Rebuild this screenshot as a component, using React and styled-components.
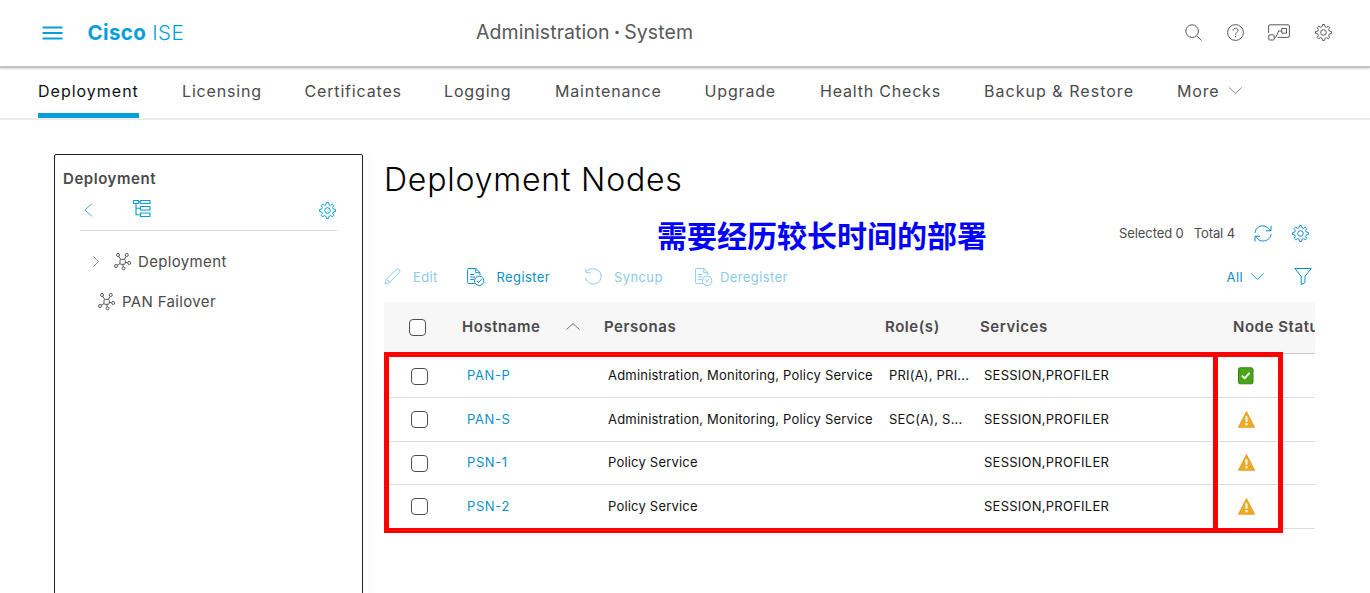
import React from 'react';
import styled, { createGlobalStyle } from 'styled-components';

const GlobalStyle = createGlobalStyle`
  *, *::before, *::after { box-sizing: border-box; }
  html, body { margin: 0; padding: 0; overflow: hidden; background: #fff; }
  body { font-family: Inter, "Liberation Sans", sans-serif; color: #4a4a4c; }
  svg { display: block; flex: none; overflow: visible; }
`;

const Page = styled.div`
  width: 1370px;
  height: 593px;
  overflow: hidden;
  display: flex;
  flex-direction: column;
`;

const TopBar = styled.header`
  height: 68px;
  flex: none;
  display: grid;
  grid-template-columns: 42px 434px 1fr auto;
  align-items: center;
  padding: 0 38px 3px 0;
  border-bottom: 2px solid #c2c2c2;
  box-shadow: 0 1px 2px rgba(0, 0, 0, 0.16);
`;

const Brand = styled.div`
  grid-column: 2;
  display: flex;
  align-items: center;
  gap: 24.5px;
  padding-top: 3px;
  color: #049fd9;
`;

const BrandName = styled.div`
  font-size: 20.5px;
  line-height: 26px;
  font-weight: 300;
  white-space: pre;
  letter-spacing: 0.4px;
  b { font-weight: 700; letter-spacing: 0.35px; }
`;

const Crumb = styled.div`
  font-size: 19.5px;
  line-height: 26px;
  letter-spacing: 0.07px;
  word-spacing: -1.6px;
  color: #58585b;
  white-space: nowrap;
  b { font-weight: 700; }
`;

const TopIcons = styled.div`
  display: flex;
  align-items: center;
  gap: 24.7px;
  padding-top: 1px;
  color: #58585b;
`;

const Tabs = styled.nav`
  height: 52px;
  flex: none;
  display: flex;
  gap: 43px;
  padding-left: 38px;
  border-bottom: 2px solid #ececec;
`;

const Tab = styled.a`
  display: flex;
  flex: none;
  align-items: flex-start;
  gap: 9px;
  width: ${(p) => p.$width}px;
  height: 50px;
  padding-top: 11px;
  font-size: 16px;
  line-height: 24px;
  letter-spacing: ${(p) => p.$track || 0.84}px;
  white-space: nowrap;
  color: ${(p) => (p.$active ? '#111' : '#4a4a4c')};
  border-bottom: 5px solid ${(p) => (p.$active ? '#049fd9' : 'transparent')};
`;

const TabCaret = styled.span`
  padding-top: 8px;
  color: #77777a;
`;

const Body = styled.main`
  flex: 1;
  display: flex;
  min-height: 0;
  padding: 34px 0 0 54px;
`;

const Sidebar = styled.aside`
  width: 309px;
  flex: none;
  margin-bottom: -10px;
  border: 1px solid #222;
  border-radius: 2px;
  padding: 13px 8px 0;
`;

const SideTitle = styled.h2`
  margin: 0;
  font-size: 15px;
  line-height: 22px;
  font-weight: 600;
  letter-spacing: 0.55px;
`;

const SideTools = styled.div`
  height: 41px;
  margin: 0 17px;
  padding: 0 1px 0 4px;
  display: flex;
  align-items: center;
  border-bottom: 1px solid #d8d8d8;
  color: #049fd9;
`;

const TreeButton = styled.span`
  margin: -3px 0 0 40px;
`;

const Spacer = styled.span`
  flex: ${(p) => (p.$w ? `0 0 ${p.$w}px` : 1)};
`;

const TreeRow = styled.div`
  display: flex;
  align-items: center;
  height: 40px;
  padding-left: ${(p) => p.$indent}px;
  font-size: 15px;
  letter-spacing: 0.35px;
  gap: ${(p) => p.$gap || 7}px;
  white-space: nowrap;
`;

const Tree = styled.div`
  padding-top: 10px;
`;

const Divider = styled.div`
  width: 5px;
  margin-left: 5px;
  flex: none;
  background: #fcfcfc;
`;

const Content = styled.section`
  width: 931px;
  margin-left: 11px;
  flex: none;
  display: flex;
  flex-direction: column;
`;

const Title = styled.h1`
  margin: 5px 0 0;
  font-size: 32px;
  line-height: 42px;
  font-weight: 300;
  letter-spacing: 0.8px;
  color: #000;
  white-space: nowrap;
`;

const SummaryRow = styled.div`
  height: 40px;
  margin-top: 12px;
  display: flex;
  align-items: center;
  padding-right: 6px;
  font-size: 13px;
  letter-spacing: -0.1px;
`;

const Note = styled.div`
  margin-left: 273px;
  flex: 1;
  font-family: "Noto Sans CJK SC", sans-serif;
  font-size: 30px;
  line-height: 40px;
  font-weight: 700;
  letter-spacing: 0;
  padding-top: 1px;
  color: #0000ff;
  white-space: nowrap;
`;

const Counts = styled.div`
  display: flex;
  gap: 10px;
  margin-right: 19px;
  white-space: nowrap;
`;

const SummaryIcons = styled.div`
  display: flex;
  gap: 20px;
  color: #0d8fc9;
`;

const Toolbar = styled.div`
  height: 49px;
  padding-bottom: 2px;
  display: flex;
  align-items: center;
  padding-right: 3px;
  font-size: 13px;
  letter-spacing: 0.4px;
  color: #0d8fc9;
`;

const Action = styled.button`
  display: flex;
  align-items: center;
  gap: ${(p) => p.$gap}px;
  margin: 0 ${(p) => p.$after || 0}px 0 0;
  width: ${(p) => (p.$width ? `${p.$width}px` : 'auto')};
  padding: 0;
  border: 0;
  background: none;
  font: inherit;
  letter-spacing: inherit;
  white-space: nowrap;
  color: ${(p) => (p.$enabled ? '#0d8fc9' : '#8bcbe8')};
`;

const Table = styled.div`
  position: relative;
`;

const columns = '78px 142px 281px 95px 253px 82px';

const HeadRow = styled.div`
  display: grid;
  grid-template-columns: ${columns};
  align-items: center;
  height: 52px;
  padding-bottom: 2px;
  background: #f7f7f7;
  border-bottom: 1px solid #c8c8c8;
  font-size: 15px;
  font-weight: 600;
  letter-spacing: 0.55px;
`;

const HeadCell = styled.div`
  display: flex;
  align-items: center;
  gap: 26px;
  overflow: hidden;
  white-space: nowrap;
`;

const Rows = styled.div`
  padding-top: 0.5px;
`;

const Row = styled.div`
  display: grid;
  grid-template-columns: ${columns};
  align-items: center;
  height: 43.5px;
  border-bottom: 1px solid #dcdcdc;
  font-size: 13px;
  letter-spacing: 0.2px;
  color: #111;
`;

const Cell = styled.div`
  padding: 0 0 1.4px ${(p) => (p.$link ? 5 : 4)}px;
  overflow: hidden;
  text-overflow: ellipsis;
  white-space: nowrap;
  line-height: 20px;
  letter-spacing: ${(p) => (p.$link ? '0.6px' : p.$caps ? '0.25px' : 'inherit')};
  color: ${(p) => (p.$link ? '#0d8fc9' : 'inherit')};
`;

const Check = styled.span`
  display: block;
  width: 17px;
  height: 17px;
  margin: 1px 0 0 ${(p) => p.$left}px;
  border: 1px solid #4f4f4f;
  border-radius: 4px;
  background: #fff;
`;

const Highlight = styled.div`
  position: absolute;
  left: ${(p) => p.$left}px;
  top: 50px;
  width: ${(p) => p.$width}px;
  height: 181px;
  border: 5px solid #ff0000;
  pointer-events: none;
`;

const Status = styled.div`
  padding-left: 4.5px;
`;

const Svg = ({ w, h = w, sw = 1, children, ...rest }) => (
  <svg width={w} height={h} viewBox={`0 0 ${w} ${h}`} fill="none" stroke="currentColor" strokeWidth={sw} strokeLinejoin="round" {...rest}>
    {children}
  </svg>
);

const gearPath = (() => {
  const pts = [];
  for (let i = 0; i < 8; i += 1) {
    const a = (i * Math.PI) / 4;
    [[-0.25, 6], [-0.12, 8], [0.12, 8], [0.25, 6]].forEach(([d, r]) => {
      pts.push(`${(8.5 + r * Math.sin(a + d)).toFixed(2)} ${(8.5 - r * Math.cos(a + d)).toFixed(2)}`);
    });
  }
  return `M${pts.join('L')}Z`;
})();

const Gear = () => (
  <Svg w={17}>
    <path d={gearPath} />
    <circle cx="8.5" cy="8.5" r="2.8" />
  </Svg>
);

const Caret = ({ dir = 'down' }) => {
  if (dir === 'left') return <Svg w={9} h={14}><path d="M8.2 .5L.8 7l7.4 6.500" stroke="#4db5df" /></Svg>;
  if (dir === 'right') return <Svg w={6} h={11}><path d="M.5 .5L5.500 5.500 .5 10.500" stroke="#8e8e90" /></Svg>;
  if (dir === 'up') return <Svg w={14} h={7}><path d="M.5 6.500L7 .5l6.500 6" stroke="#77777a" /></Svg>;
  return <Svg w={13} h={7} sw={0.9}><path d="M.3 .5L6.500 6.500 12.700 .5" /></Svg>;
};

const Menu = () => (
  <Svg w={21} h={14} sw={2}><path d="M.6 1.500h20M.6 7h20M.6 12.500h20" /></Svg>
);

const Search = () => (
  <Svg w={17}><circle cx="7.100" cy="7.100" r="6.300" /><path d="M11.700 11.700l4.800 4.800" /></Svg>
);

const Help = () => (
  <Svg w={17}>
    <circle cx="8.500" cy="8.500" r="7.900" />
    <path d="M6 6.700C6 3.400 11 3.500 11 6.400c0 2-2.500 2.100-2.500 4.300M8.500 12v1.300" />
  </Svg>
);

const Screen = () => (
  <Svg w={22} h={17}>
    <path d="M.6 9V2Q.6 .8 1.900 .8H20Q21.400 .8 21.400 2v10q0 1.400-1.400 1.400H9.500" />
    <rect x=".8" y="10.800" width="5.400" height="5.200" rx="1" />
    <rect x="13.800" y="4.500" width="4.700" height="4.700" />
    <path d="M6.300 13.300h1.500L10.700 7h3" />
  </Svg>
);

const TreeIcon = () => (
  <Svg w={18} h={17} sw={1.15}>
    <rect x=".5" y=".5" width="5" height="3" />
    <rect x="7.500" y=".5" width="9.500" height="3" />
    <rect x="7.500" y="6.500" width="9.500" height="3.500" />
    <rect x="7.500" y="13" width="9.500" height="3.500" />
    <path d="M5.500 2h2M3 3.500v11.200h4.500M3 8.200h4.500" />
  </Svg>
);

const Cluster = () => (
  <Svg w={17} h={17} stroke="#58585b">
    <rect x="6" y="6.300" width="5.200" height="5" rx="1" />
    <circle cx="4" cy="2" r="1.500" />
    <circle cx="12.800" cy="2" r="1.500" />
    <circle cx="2" cy="13" r="1.500" />
    <circle cx="15.200" cy="10" r="1.500" />
    <circle cx="9.500" cy="15.300" r="1.500" />
    <path d="M4.800 3.300l1.800 3M12 3.300l-1.500 3M3.300 12.200L6 10.500M11.200 9.200l2.500 .5M8.800 11.300l.4 2.500" />
  </Svg>
);

const Pencil = () => (
  <Svg w={17} h={17}>
    <path d="M.9 16.100L2.200 11.600 12.500 1.300Q13.800 .3 15.200 1.600 16.600 3.200 15.500 4.400L5.200 14.700ZM2.200 11.600Q4.600 12 5.200 14.700" />
  </Svg>
);

const DocBadge = ({ cross }) => (
  <Svg w={18} h={18}>
    <path d="M7.500 15.500H1.500Q.6 15.500.6 14.500V1.500Q.6 .5 1.500 .5H8.800L13 4.700V7M8.800 .5V4.700H13M3.200 6.500h4M3.200 9h5M3.200 11.500h3.500" />
    <circle cx="12.200" cy="12.800" r="4.700" />
    {cross ? <path d="M10.600 11.200l3.200 3.200M13.800 11.200l-3.200 3.200" /> : <path d="M9.900 12.900l1.600 1.600 3-3.300" />}
  </Svg>
);

const Undo = () => (
  <Svg w={17}>
    <path d="M1.500 3.800C5-.7 12-.2 14.900 4.300c3.200 5-.3 11.700-6.400 11.700C4.600 16 1.300 13.200.7 9.500M1 .3v4.500h5" />
  </Svg>
);

const Refresh = () => (
  <Svg w={18} h={17}>
    <path d="M1 8C1.300 2.600 7-.7 12 1.600c2 .9 3.300 2.300 4.100 4M17 .7v5.100h-5M17 9c-.4 5.200-6 8.500-11 6.400-2-.9-3.400-2.300-4.200-4M1 16.500v-5.200h5" />
  </Svg>
);

const Filter = () => (
  <Svg w={18} h={17}>
    <path d="M.8 .5H17.200L11 8.300V14.500L7.200 16.500V8.300Z" />
  </Svg>
);

const OkIcon = () => (
  <Svg w={16} h={17} stroke="none">
    <rect x=".5" y=".8" width="14.500" height="16" rx="1.500" fill="#49a51b" stroke="#36860f" />
    <path d="M4 8.700l2.600 2.600 5-5.400" stroke="#fff" strokeWidth="1.900" />
  </Svg>
);

const WarnIcon = () => (
  <Svg w={17} h={17} stroke="none">
    <path d="M8.500 .6L16.500 16.200H.5Z" fill="#efaa24" stroke="#e2a02b" />
    <path d="M8.500 5.300v5.400M8.500 12v2.200" stroke="#fff" strokeWidth="2" />
  </Svg>
);

const tabs = [
  { label: 'Deployment', width: 101, track: 1, active: true },
  { label: 'Licensing', width: 79.5 },
  { label: 'Certificates', width: 96.5 },
  { label: 'Logging', width: 68 },
  { label: 'Maintenance', width: 106.5 },
  { label: 'Upgrade', width: 72.5 },
  { label: 'Health Checks', width: 121, track: 0.8 },
  { label: 'Backup & Restore', width: 150, track: 1.03 },
];

const nodes = [
  { host: 'PAN-P', personas: 'Administration, Monitoring, Policy Service', roles: 'PRI(A), PRI...', ok: true },
  { host: 'PAN-S', personas: 'Administration, Monitoring, Policy Service', roles: 'SEC(A), S...' },
  { host: 'PSN-1', personas: 'Policy Service', roles: '' },
  { host: 'PSN-2', personas: 'Policy Service', roles: '' },
];

export default function App() {
  return (
    <Page>
      <GlobalStyle />
      <TopBar>
        <Brand>
          <Menu />
          <BrandName><b>Cisco</b> ISE</BrandName>
        </Brand>
        <Crumb>Administration <b>·</b> System</Crumb>
        <TopIcons>
          <Search />
          <Help />
          <Screen />
          <Gear />
        </TopIcons>
      </TopBar>
      <Tabs>
        {tabs.map((t) => (
          <Tab key={t.label} $width={t.width} $track={t.track} $active={t.active}>{t.label}</Tab>
        ))}
        <Tab $width={66}>More<TabCaret><Caret /></TabCaret></Tab>
      </Tabs>
      <Body>
        <Sidebar>
          <SideTitle>Deployment</SideTitle>
          <SideTools>
            <Caret dir="left" />
            <TreeButton><TreeIcon /></TreeButton>
            <Spacer />
            <Gear />
          </SideTools>
          <Tree>
            <TreeRow $indent={30}>
              <Caret dir="right" />
              <Spacer $w={1} />
              <Cluster />
              Deployment
            </TreeRow>
            <TreeRow $indent={35}>
              <Cluster />
              PAN Failover
            </TreeRow>
          </Tree>
        </Sidebar>
        <Divider />
        <Content>
          <Title>Deployment Nodes</Title>
          <SummaryRow>
            <Note>需要经历较长时间的部署</Note>
            <Counts><span>Selected 0</span><span>Total 4</span></Counts>
            <SummaryIcons>
              <Refresh />
              <Gear />
            </SummaryIcons>
          </SummaryRow>
          <Toolbar>
            <Action $gap={12} $width={83}><Pencil />Edit</Action>
            <Action $gap={11.5} $width={118} $enabled><DocBadge />Register</Action>
            <Action $gap={12} $width={110}><Undo />Syncup</Action>
            <Action $gap={7}><DocBadge cross />Deregister</Action>
            <Spacer />
            <Action $gap={8} $after={30} $enabled>All<Caret /></Action>
            <Filter />
          </Toolbar>
          <Table>
            <HeadRow>
              <Check $left={25} />
              <HeadCell>Hostname<Caret dir="up" /></HeadCell>
              <HeadCell>Personas</HeadCell>
              <HeadCell>Role(s)</HeadCell>
              <HeadCell>Services</HeadCell>
              <HeadCell>Node Status</HeadCell>
            </HeadRow>
            <Rows>
              {nodes.map((n) => (
                <Row key={n.host}>
                  <Check $left={27} />
                  <Cell $link>{n.host}</Cell>
                  <Cell>{n.personas}</Cell>
                  <Cell>{n.roles}</Cell>
                  <Cell $caps>SESSION,PROFILER</Cell>
                  <Status>{n.ok ? <OkIcon /> : <WarnIcon />}</Status>
                </Row>
              ))}
            </Rows>
            <Highlight $left={0} $width={834} />
            <Highlight $left={829} $width={70} />
          </Table>
        </Content>
      </Body>
    </Page>
  );
}
